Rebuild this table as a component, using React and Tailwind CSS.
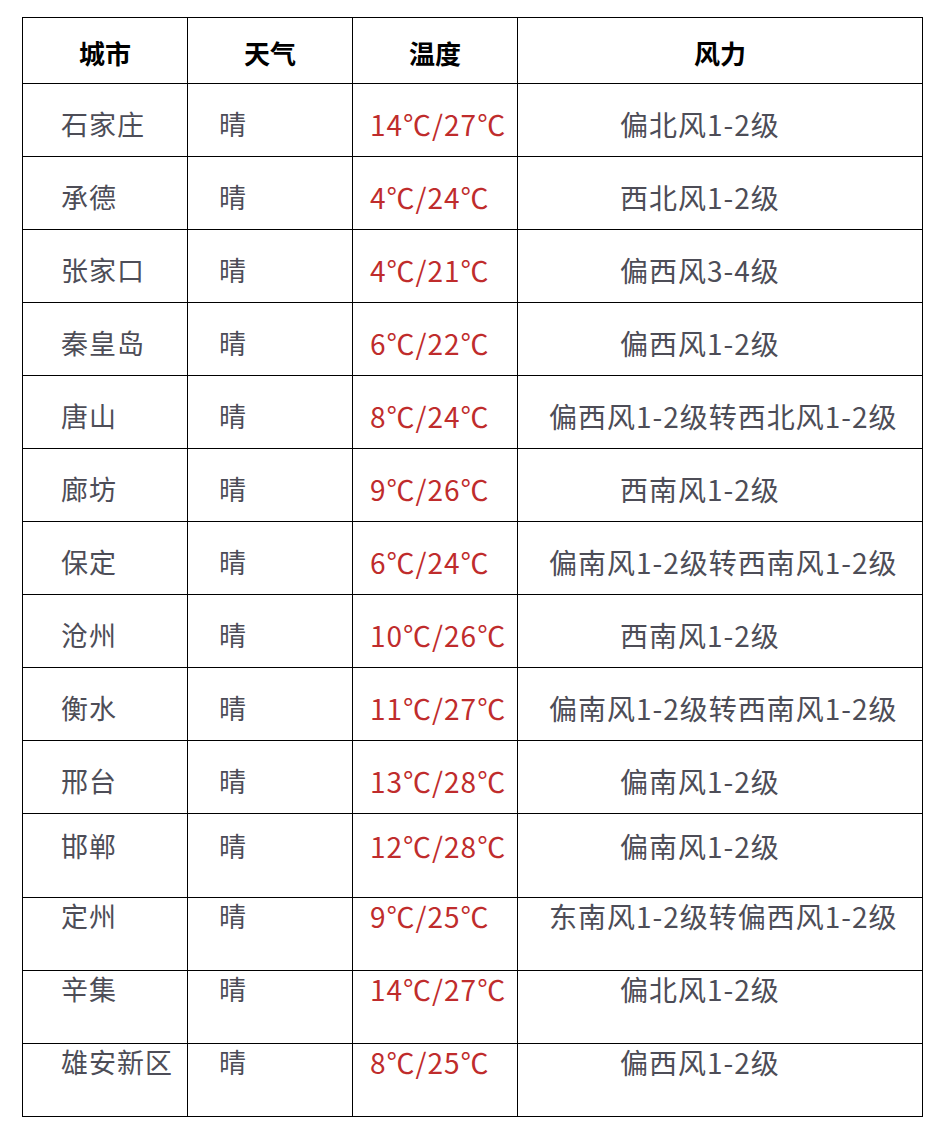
const rows = [
  { city: '石家庄', temp: '14℃/27℃', wind: '偏北风1-2级' },
  { city: '承德', temp: '4℃/24℃', wind: '西北风1-2级' },
  { city: '张家口', temp: '4℃/21℃', wind: '偏西风3-4级' },
  { city: '秦皇岛', temp: '6℃/22℃', wind: '偏西风1-2级' },
  { city: '唐山', temp: '8℃/24℃', wind: '偏西风1-2级转西北风1-2级', long: true },
  { city: '廊坊', temp: '9℃/26℃', wind: '西南风1-2级' },
  { city: '保定', temp: '6℃/24℃', wind: '偏南风1-2级转西南风1-2级', long: true },
  { city: '沧州', temp: '10℃/26℃', wind: '西南风1-2级' },
  { city: '衡水', temp: '11℃/27℃', wind: '偏南风1-2级转西南风1-2级', long: true },
  { city: '邢台', temp: '13℃/28℃', wind: '偏南风1-2级' },
  { city: '邯郸', temp: '12℃/28℃', wind: '偏南风1-2级', kind: 'tall' },
  { city: '定州', temp: '9℃/25℃', wind: '东南风1-2级转偏西风1-2级', long: true, kind: 'top' },
  { city: '辛集', temp: '14℃/27℃', wind: '偏北风1-2级', kind: 'top' },
  { city: '雄安新区', temp: '8℃/25℃', wind: '偏西风1-2级', kind: 'top' },
]

const font = { fontFamily: '"Noto Sans CJK SC", sans-serif' }

export default function App() {
  return (
    <div className="min-h-[1129px] w-[942px] bg-white pt-[17px] pl-[22px]" style={font}>
      <div className="w-[901px] border-l border-t border-black">
        {/* header */}
        <div className="grid grid-cols-[165px_165px_165px_405px] h-[66px] text-[26px] font-semibold text-black">
          {['城市', '天气', '温度', '风力'].map((h) => (
            <div key={h} className="flex items-center justify-center border-r border-b border-black pt-[3px]">
              {h}
            </div>
          ))}
        </div>
        {rows.map((r) => {
          const h = r.kind === 'tall' ? 'h-[84px]' : 'h-[73px]'
          const pt = r.kind === 'tall' ? 'pt-[16px]' : r.kind === 'top' ? 'pt-[2px]' : 'pt-[24px]'
          return (
            <div
              key={r.city}
              className={`grid grid-cols-[165px_165px_165px_405px] ${h} leading-[32px] text-[#4d4d57]`}
            >
              <div className={`border-r border-b border-black pl-[38px] text-[27px] tracking-[1px] whitespace-nowrap ${pt}`}>
                {r.city}
              </div>
              <div className={`border-r border-b border-black pl-[31px] text-[27px] ${pt}`}>晴</div>
              <div
                className={`border-r border-b border-black pl-[17px] text-[28px] tracking-[1px] text-[#bf2c2c] whitespace-nowrap ${pt}`}
              >
                {r.temp}
              </div>
              <div
                className={`border-r border-b border-black text-[28px] tracking-[1px] whitespace-nowrap ${r.long ? 'pl-[31px]' : 'pl-[102px]'} ${pt}`}
              >
                {r.wind}
              </div>
            </div>
          )
        })}
      </div>
    </div>
  )
}
